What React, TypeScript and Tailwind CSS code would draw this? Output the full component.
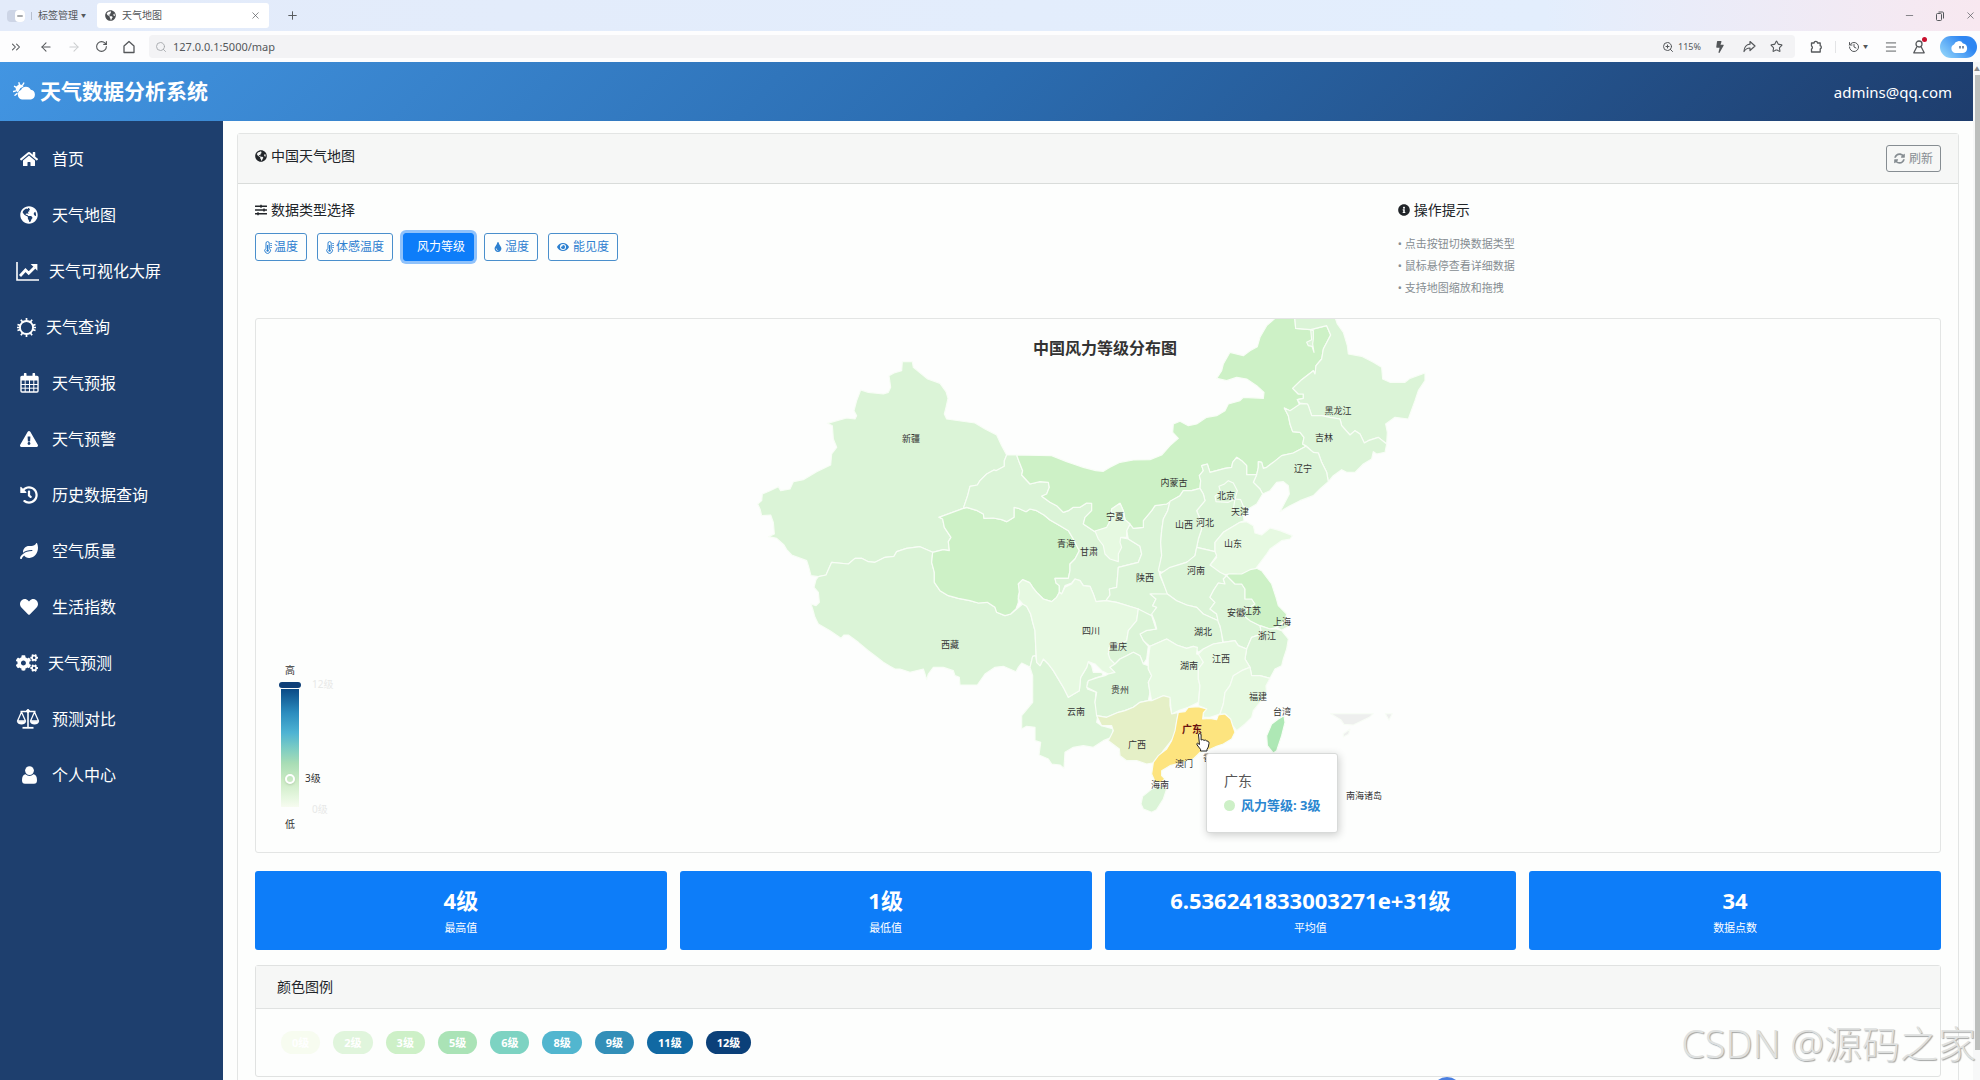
import { useState } from "react"
import clsx from "clsx"
import {
  ArrowLeft,
  ArrowRight,
  ChevronsRight,
  History,
  Menu,
  Minus,
  Plus,
  RotateCw,
  Search,
  Star,
  X,
  ZoomIn,
} from "lucide-react"
import {
  FaBolt,
  FaCogs,
  FaExclamationTriangle,
  FaEye,
  FaGlobeAmericas,
  FaHeart,
  FaHistory,
  FaHome,
  FaInfoCircle,
  FaLeaf,
  FaSlidersH,
  FaSyncAlt,
  FaTint,
} from "react-icons/fa"

type Region = {
  name: string
  fill: string
  points: string
}

type MapSheet = {
  x: number
  y: number
  regions: Region[]
}

const LEVEL_1 = "#e6f9e1"
const LEVEL_2 = "#dbf4d7"
const LEVEL_3 = "#cdf1c6"

const SHEETS: MapSheet[] = [
  {
    x: 0,
    y: 0,
    regions: [
      {
        name: "新疆",
        fill: LEVEL_2,
        points:
          "487,158 517,158 520,175 563,210 600,223 618,248 624,268 618,295 613,315 620,330 705,342 735,360 770,378 785,410 800,438 793,455 793,472 768,485 762,483 740,495 720,515 712,528 690,532 683,560 670,598 597,625 608,630 613,655 633,685 625,698 628,725 610,722 578,730 540,713 500,718 470,728 462,742 435,745 405,760 385,758 365,748 345,748 325,765 275,760 258,798 235,803 213,800 205,770 200,755 155,738 140,722 132,708 110,688 85,683 103,675 100,640 92,618 65,620 60,600 53,585 65,575 67,555 90,545 115,533 122,545 150,540 160,518 190,512 230,488 272,468 275,435 290,415 280,390 277,350 262,343 320,327 345,330 350,320 342,305 350,275 362,243 385,250 430,255 445,250 452,235 447,200 462,192 485,185",
      },
      {
        name: "西藏",
        fill: LEVEL_2,
        points:
          "258,798 275,760 325,765 345,748 365,748 385,758 405,760 435,745 462,742 470,728 500,718 540,713 578,730 575,760 583,790 583,820 600,845 625,860 655,868 690,875 715,882 742,880 765,895 770,910 795,920 812,915 830,900 848,885 860,892 872,915 878,940 885,965 887,1010 888,1040 878,1042 870,1075 862,1070 845,1062 835,1075 828,1088 790,1072 765,1075 735,1095 712,1128 660,1128 658,1105 645,1100 640,1085 610,1075 580,1075 565,1095 560,1112 555,1095 550,1080 510,1090 480,1080 465,1080 450,1072 430,1060 405,1040 385,1025 355,1000 325,978 312,978 303,988 270,965 235,945 225,925 218,900 213,885 228,890 238,880 235,850 222,835 228,812 235,803",
      },
      {
        name: "青海",
        fill: LEVEL_3,
        points:
          "597,625 670,598 680,595 690,598 712,605 730,615 732,628 760,627 785,632 800,638 822,625 822,595 835,598 858,608 870,600 890,605 912,618 930,633 960,650 985,665 1000,690 1010,710 1018,725 1005,750 990,765 990,785 985,808 945,808 948,822 958,830 958,850 950,865 935,878 910,870 890,850 878,835 868,820 848,812 835,825 840,845 835,860 835,880 828,900 812,915 795,920 770,910 765,895 742,880 715,882 690,875 655,868 625,860 600,845 583,820 583,790 575,760 578,730 610,722 628,725 625,698 633,685 613,655 608,630",
      },
      {
        name: "甘肃",
        fill: LEVEL_2,
        points:
          "800,438 830,438 838,460 848,485 845,498 870,525 900,518 925,520 928,535 920,555 905,562 930,580 950,590 970,610 985,605 1000,595 1020,595 1040,582 1055,583 1055,605 1035,625 1030,645 1065,668 1140,660 1140,685 1165,690 1200,712 1205,735 1195,760 1135,775 1130,835 1108,840 1110,858 1098,875 1068,878 1060,855 1050,832 1030,830 1020,815 1005,810 995,822 975,830 965,855 958,850 958,830 948,822 945,808 985,808 990,785 990,765 1005,750 1018,725 1010,710 1000,690 985,665 960,650 930,633 912,618 890,605 870,600 858,608 835,598 822,595 822,625 800,638 785,632 760,627 732,628 730,615 712,605 690,598 680,595 670,598 683,560 690,532 712,528 720,515 740,495 762,483 768,485 793,472 793,455",
      },
      {
        name: "陕西",
        fill: LEVEL_2,
        points:
          "1280,585 1290,577 1283,605 1270,630 1265,665 1262,700 1265,740 1257,787 1260,800 1280,845 1285,857 1232,855 1248,870 1238,890 1250,895 1235,920 1205,910 1195,900 1130,880 1098,875 1110,858 1108,840 1130,835 1135,775 1195,760 1205,735 1200,712 1165,690 1160,665 1170,645 1180,658 1210,655 1210,635 1235,605 1245,590",
      },
    ],
  },
  {
    x: 1080,
    y: 0,
    regions: [
      {
        name: "内蒙古",
        fill: LEVEL_3,
        points:
          "-250,438 -145,440 -100,458 -80,465 -50,475 -12,485 10,487 30,475 60,460 100,453 150,452 185,438 210,410 235,388 218,370 220,345 240,337 265,350 290,345 320,325 350,320 375,305 385,285 420,275 430,265 490,268 492,250 470,230 440,210 410,205 380,215 350,208 365,185 370,165 390,130 430,140 450,125 472,113 480,85 500,50 525,28 540,10 583,10 587,58 632,62 680,50 692,78 670,120 665,150 648,170 645,195 640,185 605,212 578,238 595,255 610,255 610,268 592,272 600,290 570,305 553,297 565,320 570,345 578,368 600,370 612,385 608,405 618,412 580,432 545,440 520,460 500,475 490,478 485,460 475,458 475,475 470,497 440,497 440,470 425,455 410,445 398,460 395,475 375,478 350,485 330,490 322,465 305,470 310,485 298,500 302,515 300,538 275,545 250,545 240,560 215,575 200,585 165,590 155,605 130,635 130,655 100,658 90,645 75,632 70,605 60,583 35,600 28,640 25,655 -15,668 -50,645 -45,625 -25,605 -25,583 -40,582 -60,595 -80,595 -95,605 -110,610 -130,590 -150,580 -175,562 -160,555 -152,535 -155,520 -180,518 -210,525 -235,498 -232,485 -242,460",
      },
      {
        name: "宁夏",
        fill: LEVEL_1,
        points:
          "-15,666 20,655 28,640 35,600 60,583 70,605 75,632 90,645 80,665 80,685 62,685 60,700 65,715 55,735 55,758 30,750 15,735 10,710 -5,690",
      },
      {
        name: "黑龙江",
        fill: LEVEL_2,
        points:
          "583,10 700,10 712,45 730,70 742,110 745,135 785,142 820,160 845,175 848,210 870,220 915,220 930,208 975,192 975,215 955,245 945,275 925,330 885,325 857,345 862,370 860,405 835,385 805,395 793,402 780,375 765,365 750,378 725,350 720,330 690,325 665,320 635,320 625,290 622,285 600,282 592,272 610,268 610,255 595,255 578,238 605,212 640,185 645,195 648,170 665,150 670,120 692,78 680,50 632,62 587,58",
      },
      {
        name: "加格达奇",
        fill: LEVEL_2,
        points: "632,62 640,65 640,90 638,105 642,130 636,112 625,110 620,100 635,92",
      },
      {
        name: "吉林",
        fill: LEVEL_2,
        points:
          "600,285 622,285 625,290 635,320 665,320 690,325 720,330 725,350 750,378 765,365 780,375 793,402 805,395 835,385 860,405 855,430 830,435 820,428 815,450 790,465 765,490 740,490 725,482 700,500 685,518 680,490 665,460 655,432 640,430 618,410 608,405 612,385 600,370 578,368 570,345 565,320 553,297 570,305",
      },
      {
        name: "辽宁",
        fill: LEVEL_2,
        points:
          "618,412 640,430 655,432 665,460 680,490 685,518 660,540 640,560 600,575 570,590 540,608 555,580 568,555 565,530 550,518 530,520 510,545 488,555 480,540 460,520 470,497 475,475 475,458 485,460 490,478 500,475 520,460 545,440 580,432",
      },
      {
        name: "河北",
        fill: LEVEL_2,
        points:
          "300,538 302,515 298,500 310,485 305,470 322,465 330,490 350,485 375,478 395,475 398,460 410,445 425,455 440,470 440,497 470,497 460,520 480,540 488,555 470,585 450,597 430,610 432,635 420,640 395,655 370,670 345,700 345,728 290,715 295,690 305,660 300,630 290,605 315,575 310,555",
      },
      {
        name: "北京",
        fill: LEVEL_2,
        points: "348,578 345,562 362,550 357,532 372,526 385,515 400,522 412,545 405,570 385,580",
      },
      {
        name: "天津",
        fill: LEVEL_2,
        points: "405,570 422,572 430,592 445,600 440,615 415,622 400,600",
      },
      {
        name: "山西",
        fill: LEVEL_2,
        points:
          "300,538 310,555 315,575 290,605 300,630 305,660 295,690 290,715 285,740 265,758 230,770 185,790 175,785 185,740 182,700 185,665 190,630 203,605 210,577 240,560 250,545 275,545",
      },
      {
        name: "山东",
        fill: LEVEL_1,
        points:
          "345,728 345,700 370,670 395,655 420,640 440,638 460,650 465,672 485,678 510,657 540,665 578,680 570,690 545,695 510,720 500,735 470,775 455,795 440,800 400,795 375,797 350,790 330,768 350,745",
      },
    ],
  },
  {
    x: 0,
    y: 750,
    regions: [
      {
        name: "云南",
        fill: LEVEL_2,
        points:
          "870,325 878,292 887,290 890,310 900,320 910,300 925,315 940,335 970,385 985,415 1018,395 1022,355 1040,325 1045,308 1055,320 1060,340 1085,340 1090,350 1065,357 1042,370 1042,390 1068,400 1065,430 1075,460 1070,490 1085,500 1120,510 1115,535 1090,545 1060,565 1030,560 1000,565 975,580 972,628 960,618 935,615 925,600 897,588 902,550 885,545 885,505 860,502 845,510 845,470 878,430 878,350",
      },
      {
        name: "四川",
        fill: LEVEL_1,
        points:
          "848,62 870,72 878,85 890,100 910,120 935,128 950,115 958,100 965,105 975,85 995,75 1005,60 1020,65 1030,80 1050,82 1060,105 1068,128 1098,125 1130,130 1195,150 1190,185 1165,215 1160,245 1125,262 1108,265 1105,285 1125,300 1125,315 1110,325 1125,340 1105,345 1085,335 1065,315 1045,308 1040,325 1022,355 1018,395 985,415 970,385 940,335 925,315 910,300 900,320 890,310 887,260 885,215 878,190 872,165 860,142 848,135 835,120 838,100 835,75",
      },
    ],
  },
  {
    x: 960,
    y: 750,
    regions: [
      {
        name: "河南",
        fill: LEVEL_2,
        points:
          "300,45 330,25 380,10 405,-10 410,-35 465,-22 470,-10 450,18 480,40 500,50 490,60 495,75 475,72 460,95 450,115 465,130 450,150 470,165 475,185 430,165 410,145 380,138 350,125 322,105",
      },
      {
        name: "湖北",
        fill: LEVEL_2,
        points:
          "270,105 322,105 350,125 380,138 410,145 430,165 475,185 485,220 488,250 460,255 430,270 415,280 400,262 380,268 350,258 320,240 270,262 250,245 240,225 258,215 290,210 285,190 275,165 290,145 278,140 288,120",
      },
      {
        name: "安徽",
        fill: LEVEL_2,
        points:
          "500,50 525,75 545,75 555,90 555,120 575,120 585,135 570,145 545,165 570,185 600,200 605,225 575,235 560,270 535,260 525,245 490,250 480,200 475,190 470,165 450,150 465,130 450,115 460,95 475,72 495,75 490,60",
      },
      {
        name: "江苏",
        fill: LEVEL_3,
        points:
          "505,45 545,45 570,32 590,28 605,35 635,75 648,115 655,140 680,165 675,185 650,205 630,210 600,200 570,185 545,165 570,145 585,135 575,120 555,120 555,90 545,75 525,75 500,50",
      },
      { name: "上海", fill: LEVEL_2, points: "650,205 675,188 690,200 665,214" },
      {
        name: "浙江",
        fill: LEVEL_2,
        points:
          "605,225 600,200 630,210 650,210 665,215 685,240 680,270 670,300 665,320 645,330 630,358 600,350 575,350 570,325 555,300 560,270 575,235",
      },
      {
        name: "重庆",
        fill: LEVEL_2,
        points:
          "235,150 275,170 288,210 258,215 240,225 250,245 265,262 260,300 250,315 240,290 220,280 200,290 180,300 165,315 150,300 145,285 148,265 165,262 200,245 205,215 230,185",
      },
      {
        name: "贵州",
        fill: LEVEL_2,
        points:
          "165,315 180,300 200,290 220,280 240,290 250,315 265,320 265,330 275,350 265,370 270,400 265,425 240,430 220,445 195,455 175,460 140,475 110,470 105,430 110,400 80,385 85,365 115,355 135,350 145,345 165,340 150,325",
      },
      {
        name: "湖南",
        fill: LEVEL_1,
        points:
          "270,262 320,240 350,258 380,268 400,262 412,265 410,285 430,290 430,310 415,330 415,360 420,380 415,430 385,445 355,455 335,465 330,420 310,410 275,425 270,400 265,370 275,350 265,330 265,300",
      },
      {
        name: "江西",
        fill: LEVEL_1,
        points:
          "415,285 430,270 460,255 490,250 525,245 535,260 560,270 555,300 570,325 545,335 520,350 510,380 495,400 490,435 480,465 450,475 430,475 430,460 440,450 415,440 420,380 415,360 415,330 430,310",
      },
      {
        name: "福建",
        fill: LEVEL_1,
        points:
          "570,325 575,350 600,350 630,358 618,380 620,410 600,430 580,455 575,475 555,495 530,515 518,500 510,480 495,465 480,465 490,435 495,400 510,380 520,350 545,335",
      },
      {
        name: "广西",
        fill: "#e5f0c7",
        points:
          "110,470 140,475 175,460 195,455 220,445 240,430 265,425 275,425 310,410 330,415 330,440 335,465 355,460 350,490 345,530 330,550 310,575 290,610 260,615 230,605 200,605 180,590 178,570 145,545 160,515 155,500 125,500",
      },
      {
        name: "海南",
        fill: LEVEL_2,
        points: "275,690 305,680 320,690 310,720 290,752 275,760 250,750 243,735 248,712",
      },
      {
        name: "台湾",
        fill: "#aee8b5",
        points: "655,480 672,470 675,490 665,530 650,575 640,582 622,560 620,530 635,495",
      },
      {
        name: "南海诸岛",
        fill: "#eeefee",
        points: "812,464 940,464 928,475 880,498 852,496 842,482",
      },
      { name: "南海诸岛-2", fill: "#eeefee", points: "850,524 870,510 866,526 850,534" },
      { name: "南海诸岛-3", fill: "#eeefee", points: "976,464 997,464 987,484" },
      {
        name: "广东",
        fill: "#fde47f",
        points:
          "355,460 375,458 385,445 415,443 440,450 430,462 428,480 450,478 470,482 475,468 495,465 512,480 518,500 525,520 515,540 490,555 470,562 440,575 420,580 400,600 360,612 330,620 305,635 305,650 315,660 300,672 285,668 275,645 280,610 295,590 320,570 335,545 345,515 350,485",
      },
    ],
  },
]

const MAP_LABELS: [string, number, number][] = [
  ["新疆", 656, 119],
  ["西藏", 695, 325],
  ["青海", 811, 224],
  ["甘肃", 834, 232],
  ["宁夏", 860, 197],
  ["内蒙古", 919, 163],
  ["黑龙江", 1083, 91],
  ["吉林", 1069, 118],
  ["辽宁", 1048, 149],
  ["北京", 971, 176],
  ["天津", 985, 192],
  ["山西", 929, 205],
  ["河北", 950, 203],
  ["山东", 978, 224],
  ["河南", 941, 251],
  ["陕西", 890, 258],
  ["四川", 836, 311],
  ["重庆", 863, 327],
  ["贵州", 865, 370],
  ["云南", 821, 392],
  ["湖北", 948, 312],
  ["安徽", 981, 293],
  ["江苏", 997, 291],
  ["上海", 1027, 302],
  ["浙江", 1012, 316],
  ["湖南", 934, 346],
  ["江西", 966, 339],
  ["福建", 1003, 377],
  ["台湾", 1027, 392],
  ["广西", 882, 425],
  ["香港", 957, 438],
  ["澳门", 929, 444],
  ["海南", 905, 465],
  ["南海诸岛", 1109, 476],
]

const NAV_ITEMS = [
  { label: "首页", icon: <FaHome />, gap: "gap-[13px] pl-[19px]" },
  { label: "天气地图", icon: <FaGlobeAmericas />, gap: "gap-[13px] pl-[19px]" },
  { label: "天气可视化大屏", icon: <TrendIcon />, gap: "gap-[10px] pl-[16px]" },
  { label: "天气查询", icon: <SunIcon />, gap: "gap-[10px] pl-[16px]" },
  { label: "天气预报", icon: <CalendarIcon />, gap: "gap-[13px] pl-[19px]" },
  { label: "天气预警", icon: <FaExclamationTriangle />, gap: "gap-[13px] pl-[19px]" },
  { label: "历史数据查询", icon: <FaHistory />, gap: "gap-[13px] pl-[19px]" },
  { label: "空气质量", icon: <FaLeaf />, gap: "gap-[13px] pl-[19px]" },
  { label: "生活指数", icon: <FaHeart />, gap: "gap-[13px] pl-[19px]" },
  { label: "天气预测", icon: <FaCogs size={22} />, gap: "gap-[10px] pl-[16px]" },
  { label: "预测对比", icon: <ScaleIcon />, gap: "gap-[12px] pl-[16px]" },
  { label: "个人中心", icon: <UserIcon />, gap: "gap-[13px] pl-[19px]" },
]

const DATA_TYPES = [
  { label: "温度", icon: <ThermometerIcon /> },
  { label: "体感温度", icon: <ThermometerIcon /> },
  { label: "风力等级", icon: null },
  { label: "湿度", icon: <FaTint size={10} /> },
  { label: "能见度", icon: <FaEye className="mr-[2px]" size={12} /> },
]

const TIPS = ["点击按钮切换数据类型", "鼠标悬停查看详细数据", "支持地图缩放和拖拽"]

const STATS = [
  { value: "4级", label: "最高值" },
  { value: "1级", label: "最低值" },
  { value: "6.536241833003271e+31级", label: "平均值" },
  { value: "34", label: "数据点数" },
]

const LEGEND = [
  { label: "0级", color: "bg-[#f7fcf0]" },
  { label: "2级", color: "bg-[#e0f5dc]" },
  { label: "3级", color: "bg-[#cdf0c7]" },
  { label: "5级", color: "bg-[#aae3b6]" },
  { label: "6级", color: "bg-[#7dd3c2]" },
  { label: "8级", color: "bg-[#52b6cf]" },
  { label: "9级", color: "bg-[#338fb8]" },
  { label: "11级", color: "bg-[#1169a3]" },
  { label: "12级", color: "bg-[#0b4079]" },
]

export default function App() {
  return (
    <div className="relative flex h-screen flex-col overflow-hidden bg-[#fdfefd] font-['Noto_Sans','Noto_Sans_CJK_SC',sans-serif] text-[#212529]">
      <TabStrip />
      <Toolbar />
      <div className="flex min-h-0 flex-1">
        <div className="flex min-w-0 flex-1 flex-col">
          <header className="flex h-[59px] shrink-0 items-center justify-between bg-[linear-gradient(135deg,#4295e2_0%,#2b6cb0_50%,#1e3d6d_100%)] pl-[13px] pr-[21px] text-white">
            <a className="mb-[2px] flex items-center gap-[4px] text-[21px] leading-7 font-bold" href="#">
              <PartlySunnyIcon />
              天气数据分析系统
            </a>
            <span className="text-[15px] leading-6">admins@qq.com</span>
          </header>
          <div className="flex min-h-0 flex-1">
            <Sidebar />
            <main className="min-w-0 flex-1 overflow-hidden px-[14px] pt-[12px]">
              <MapCard />
            </main>
          </div>
        </div>
        <div className="flex w-[7px] shrink-0 flex-col items-end bg-[#f7f8f8]">
          <span className="flex h-[13px] items-center text-[6px] leading-none text-[#8b8b8b]">▲</span>
          <div className="mb-[30px] w-[5px] flex-1 bg-[#bcbfbd]" />
        </div>
      </div>
      <div className="absolute right-[518px] -bottom-[27px] size-[30px] rounded-full bg-[#4b7fe0]" />
      <p className="pointer-events-none absolute right-[4px] bottom-[13px] text-[38px] leading-[48px] font-light whitespace-nowrap text-[#dfe1e0] [text-shadow:1px_1px_1px_#a4a6a5]">
        CSDN @源码之家
      </p>
    </div>
  )
}

function TabStrip() {
  return (
    <div className="flex h-[31px] shrink-0 items-center bg-[linear-gradient(90deg,#e3ebfa_0%,#e3eefd_78%,#f8e8f0_100%)] pl-[7px] text-[10px] text-[#55585c]">
      <div className="flex h-3 w-[18px] justify-end rounded-sm bg-[#cdd5e6]">
        <span className="flex w-[10px] items-center justify-center rounded-sm bg-white">
          <Minus size={8} strokeWidth={3} />
        </span>
      </div>
      <span className="mx-[6px] h-2 w-px bg-[#b8c0cf]" />
      <button className="flex items-center gap-[3px]" type="button">
        标签管理 <span className="text-[5px]">▼</span>
      </button>
      <div className="ml-[11px] flex h-[25px] w-[172px] items-center gap-[6px] rounded-[3px] bg-white px-[8px]">
        <FaGlobeAmericas className="text-[#4c4f52]" size={11} />
        <span className="flex-1">天气地图</span>
        <button aria-label="关闭标签" type="button">
          <X size={11} strokeWidth={1.5} />
        </button>
      </div>
      <button aria-label="新建标签" className="ml-[17px]" type="button">
        <Plus size={13} strokeWidth={1.8} />
      </button>
      <div className="ml-auto flex items-center gap-[20px] pr-[4px]">
        <Minus size={11} strokeWidth={1.5} />
        <svg className="size-[10px]" fill="none" stroke="currentColor" viewBox="0 0 10 10">
          <rect height="7" rx="1" width="5" x="1.5" y="2.5" />
          <path d="M3.5 1h4q1 0 1 1v5.500" />
        </svg>
        <X size={11} strokeWidth={1.5} />
      </div>
    </div>
  )
}

function Toolbar() {
  return (
    <div className="flex h-[31px] shrink-0 items-center bg-[#fdfdfe] pl-[9px] text-[#54575a]">
      <div className="flex items-center gap-[14px]">
        <ChevronsRight size={14} strokeWidth={1.8} />
        <ArrowLeft className="ml-[2px]" size={14} strokeWidth={1.8} />
        <ArrowRight className="text-[#cbcdcf]" size={14} strokeWidth={1.8} />
        <RotateCw size={13} strokeWidth={2} />
        <svg className="size-[14px]" fill="none" stroke="currentColor" strokeLinejoin="round" strokeWidth="1.300" viewBox="0 0 14 14">
          <path d="M2 6 7 1.500 12 6v6.500H2Z" />
        </svg>
      </div>
      <div className="ml-[13px] flex h-[23px] flex-1 items-center rounded-[4px] bg-[#f3f3f5] pr-[12px] pl-[6px]">
        <Search className="text-[#a5a8ab]" size={12} strokeWidth={1.8} />
        <input
          aria-label="地址栏"
          className="ml-[6px] min-w-0 flex-1 bg-transparent text-[11px] leading-4 outline-none"
          defaultValue="127.0.0.1:5000/map"
          type="text"
        />
        <ZoomIn size={12} strokeWidth={2} />
        <span className="ml-[4px] text-[9px]">115%</span>
        <FaBolt className="ml-[13px]" size={12} />
        <svg className="ml-[17px] size-[13px]" fill="none" stroke="currentColor" strokeLinejoin="round" strokeWidth="1.2" viewBox="0 0 13 13">
          <path d="M7 1.500 12 6 7 10.500V8C4.500 8 2.500 9 1 11.500 1 7.500 3.500 4.500 7 4.200Z" />
        </svg>
        <Star className="ml-[14px]" size={13} strokeWidth={2} />
      </div>
      <div className="flex items-center pr-[3px] pl-[15px]">
        <svg className="size-[13px]" fill="none" stroke="currentColor" strokeLinejoin="round" strokeWidth="1.300" viewBox="0 0 13 13">
          <path d="M1.500 3h2.600a1.700 1.700 0 0 1 3.400 0h2.700v2.700a1.700 1.700 0 0 1 0 3.200V12H1.500V9a1.700 1.700 0 0 0 0-3Z" />
        </svg>
        <span className="mx-[12px] h-3 w-px bg-[#e3e4e6]" />
        <History size={12} strokeWidth={2} />
        <span className="ml-[3px] text-[5px]">▼</span>
        <Menu className="ml-[16px]" size={14} strokeWidth={1.6} />
        <div className="relative ml-[14px]">
          <svg className="size-[14px]" fill="none" stroke="currentColor" strokeWidth="1.3" viewBox="0 0 14 14">
            <circle cx="7" cy="4" r="3" />
            <path d="M5 6.500 1.800 12.800h10.400L9 6.500" strokeLinejoin="round" />
          </svg>
          <span className="absolute -top-[3px] -right-[1px] size-[5px] rounded-full bg-[#c8102e]" />
        </div>
        <div className="ml-[14px] flex h-[22px] w-[37px] items-center justify-center rounded-full bg-[linear-gradient(45deg,#9bdcfb,#2f86f2_70%)]">
          <svg className="h-[13px] w-[18px]" fill="white" viewBox="0 0 18 13">
            <path d="M5 13a4.500 4.500 0 0 1-1-8.500 5 5 0 0 1 9-1A4.800 4.800 0 0 1 13 13Z" />
            <path d="M10 6v2.500M13 6v2.500" stroke="#26456f" strokeWidth="1.200" />
          </svg>
        </div>
      </div>
    </div>
  )
}

function Sidebar() {
  return (
    <nav className="w-[223px] shrink-0 bg-[#1e3f6e] pt-[10px] text-white">
      {NAV_ITEMS.map((item) => (
        <a className={clsx("flex h-14 items-center text-[16px] leading-6", item.gap)} href="#" key={item.label}>
          <span className="flex min-w-[20px] justify-center text-[18px]">{item.icon}</span>
          {item.label}
        </a>
      ))}
    </nav>
  )
}

function MapCard() {
  const [dataType, setDataType] = useState("风力等级")

  return (
    <section className="min-h-[1000px] rounded-[3px] border border-[#e3e5e4]">
      <div className="flex h-[50px] items-center justify-between border-b border-[#d9dcda] bg-[#f6f7f6] px-[17px]">
        <h1 className="mb-[5px] flex items-center gap-[4px] text-[14px] leading-5">
          <FaGlobeAmericas size={12} />
          中国天气地图
        </h1>
        <button
          className="flex h-[27px] items-center gap-[4px] rounded-[3px] border border-[#868d92] px-[7px] text-[12px] text-[#868d92]"
          type="button"
        >
          <FaSyncAlt size={11} />
          刷新
        </button>
      </div>

      <div className="px-[17px] pt-[16px]">
        <div className="grid h-[118px] grid-cols-3 gap-7">
          <div className="col-span-2">
            <h2 className="flex items-center gap-[4px] text-[14px] leading-5">
              <FaSlidersH size={12} />
              数据类型选择
            </h2>
            <div className="mt-[13px] flex gap-[10px]">
              {DATA_TYPES.map((type) => (
                <button
                  aria-pressed={type.label === dataType}
                  className={clsx(
                    "flex h-[28px] items-center gap-[2px] rounded-[3px] border px-[8px] text-[12px]",
                    type.label === dataType
                      ? "border-[#0d7df9] bg-[#0d7df9] pl-[13px] text-white ring-3 ring-[#8fc2fb]"
                      : "border-[#4a8fcc] text-[#2d80d0]",
                  )}
                  key={type.label}
                  onClick={() => setDataType(type.label)}
                  type="button"
                >
                  {type.icon}
                  {type.label}
                </button>
              ))}
            </div>
          </div>
          <div>
            <h2 className="flex items-center gap-[4px] text-[14px] leading-5">
              <FaInfoCircle size={12} />
              操作提示
            </h2>
            <ul className="mt-[13px] text-[11px] leading-[22px] text-[#868d92]">
              {TIPS.map((tip) => (
                <li key={tip}>• {tip}</li>
              ))}
            </ul>
          </div>
        </div>

        <WindMap />

        <div className="mt-[18px] grid grid-cols-4 gap-[13px]">
          {STATS.map((stat) => (
            <div
              className="flex h-[79px] flex-col items-center justify-center gap-[6px] rounded-[3px] bg-[#0d7df9] text-white"
              key={stat.label}
            >
              <p className="text-[22px] leading-7 font-bold">{stat.value}</p>
              <p className="text-[11px] leading-4">{stat.label}</p>
            </div>
          ))}
        </div>

        <div className="mt-[15px] rounded-[3px] border border-[#e0e2e1]">
          <h2 className="border-b border-[#e0e2e1] bg-[#f6f7f6] px-[21px] py-[11px] text-[14px] leading-5">颜色图例</h2>
          <div className="flex gap-[13px] px-[25px] pt-[22px] pb-[22px]">
            {LEGEND.map((item) => (
              <span
                className={clsx("rounded-full px-[11px] text-[11px] leading-[23px] font-bold text-white", item.color)}
                key={item.label}
              >
                {item.label}
              </span>
            ))}
          </div>
        </div>
      </div>
    </section>
  )
}

function WindMap() {
  return (
    <div className="relative h-[535px] overflow-hidden rounded-[3px] border border-[#e3e5e4]">
      <svg className="h-full w-full" viewBox="43 0 1600 533">
        <g stroke="#f8fdf6" strokeLinejoin="round" strokeWidth="3.500" transform="translate(485 -10) scale(0.33333)">
          {SHEETS.map((sheet) => (
            <g key={`${sheet.x}-${sheet.y}`} transform={`translate(${sheet.x} ${sheet.y})`}>
              {sheet.regions.map((region) => (
                <polygon fill={region.fill} key={region.name} points={region.points} />
              ))}
            </g>
          ))}
        </g>
        <text className="text-[16px] font-bold" dominantBaseline="central" fill="#333333" textAnchor="middle" x="850" y="29">
          中国风力等级分布图
        </text>
        <g className="text-[9px]" dominantBaseline="central" fill="#333333" textAnchor="middle">
          {MAP_LABELS.map(([name, x, y]) => (
            <text key={name} x={x} y={y}>
              {name}
            </text>
          ))}
        </g>
        <text className="text-[10px] font-bold" dominantBaseline="central" fill="#6b1410" textAnchor="middle" x="937" y="410">
          广东
        </text>
        <path
          d="M943.500 416q0-1.500 1.300-1.500t1.300 1.500v5l1.500-.4 1.400.7 1.500-.2 1.300.9 1.200.2q1.200.6 1 2.200l-.7 3.600-1.300 2.300v1.700h-6.500v-1.700l-3.400-4.300q-.8-1.800.5-1.800l1.900 1.300Z"
          fill="white"
          stroke="#222222"
        />
      </svg>

      <div className="absolute bottom-[20px] left-[23px] flex w-[22px] flex-col items-center text-[10px] leading-4 text-[#333333]">
        <span>高</span>
        <span className="mt-[4px] h-[6px] w-full rounded-full bg-[#0f4079]" />
        <div className="relative mt-px h-[118px] w-[18px] bg-[linear-gradient(180deg,#0a4a86_0%,#2b8cbe_20%,#4eb3d3_37%,#7bccc4_50%,#a8ddb5_63%,#ccebc5_78%,#e6f7e0_92%,#f7fcf0_100%)]">
          <span className="absolute top-[85px] left-[4px] size-[10px] rounded-full border-2 border-white shadow-sm" />
          <span className="absolute -top-[13px] left-[31px] whitespace-nowrap text-[#e8e9e8]">12级</span>
          <span className="absolute top-[81px] left-[24px] whitespace-nowrap">3级</span>
          <span className="absolute top-[112px] left-[31px] whitespace-nowrap text-[#e8e9e8]">0级</span>
        </div>
        <span className="mt-[9px]">低</span>
      </div>

      <div
        className="absolute top-[434px] left-1/2 ml-[108px] h-[80px] w-[132px] rounded-[3px] border border-[#d8dad9] bg-white pt-[15px] pl-[17px] shadow-[1px_2px_8px_rgba(0,0,0,0.2)]"
        role="tooltip"
      >
        <p className="text-[14px] leading-6 text-[#555555]">广东</p>
        <p className="flex items-center gap-[6px] text-[13px] leading-6 font-bold whitespace-nowrap text-[#2a86d0]">
          <span className="size-[11px] rounded-full bg-[#cdf0c7]" />
          风力等级: 3级
        </p>
      </div>
    </div>
  )
}

function PartlySunnyIcon() {
  return (
    <svg className="h-[18px] w-[23px]" fill="currentColor" viewBox="0 0 23 18">
      <path d="M9 17.500a5 5 0 0 1-1-9.600 5.500 5.500 0 0 1 9.800-.2A5 5 0 0 1 18 17.500Z" />
      <path d="M3.300 8.800a4.200 4.200 0 0 1 7.200-4.300L7.300 6.300 4.800 10.500Z" />
      <path
        d="M.5 9.500 3 8.800M1.500 4.300 3.700 5.700M6 .8 6.500 3.200M10.800 1 9.600 3.200M2 13.200 4 11.600"
        stroke="currentColor"
        strokeLinecap="round"
        strokeWidth="1.400"
      />
    </svg>
  )
}

function TrendIcon() {
  return (
    <svg className="h-[19px] w-[23px]" fill="none" viewBox="0 0 23 19">
      <path d="M1 0v18h22" stroke="currentColor" strokeWidth="1.600" />
      <path d="M4 14 9.500 8l3.200 3.200L18.500 5.400" stroke="currentColor" strokeWidth="2.800" />
      <path d="M14.600 2h6.800v6.800Z" fill="currentColor" />
    </svg>
  )
}

function SunIcon() {
  return (
    <svg className="size-[19px]" fill="none" stroke="currentColor" viewBox="0 0 20 20">
      <circle cx="10" cy="10" r="6.900" strokeWidth="2" />
      <path
        d="M10 0v3M10 17v3M0 10h3M17 10h3M4.100 1.900 5.900 4.300M15.900 1.900 14.100 4.300M4.100 18.100 5.900 15.700M15.900 18.100 14.100 15.700M.5 6.900 3.300 7.800M19.500 6.900 16.700 7.800M.5 13.100 3.300 12.200M19.500 13.100 16.700 12.200"
        strokeWidth="1.800"
      />
    </svg>
  )
}

function CalendarIcon() {
  return (
    <svg className="h-[20px] w-[19px]" fill="none" stroke="currentColor" viewBox="0 0 19 20">
      <rect height="15.500" rx="1" strokeWidth="1.400" width="17" x="1" y="3.500" />
      <path d="M1 5.500h17" strokeWidth="4" />
      <path d="M1 11.500h17M1 15.200h17M5.200 7v12M9.500 7v12M13.800 7v12" />
      <path d="M5.200 1v4M13.800 1v4" strokeLinecap="round" strokeWidth="2.600" />
    </svg>
  )
}

function ScaleIcon() {
  return (
    <svg className="h-[20px] w-[24px]" fill="none" stroke="currentColor" strokeLinejoin="round" viewBox="0 0 24 20">
      <path d="M4.500 2.500h15M12 2v16" strokeWidth="1.600" />
      <path d="M6.500 18.800h11" strokeWidth="1.800" />
      <circle cx="12" cy="2" fill="currentColor" r="1.400" />
      <path d="M5.500 3 1.500 12h8Z M18.500 3l-4 9h8Z" strokeWidth="1.300" />
      <path d="M.8 12.300h9.400q-1 3.200-4.700 3.200t-4.700-3.200ZM13.800 12.300h9.400q-1 3.200-4.700 3.200t-4.700-3.200Z" fill="currentColor" stroke="none" />
    </svg>
  )
}

function UserIcon() {
  return (
    <svg className="h-[18px] w-[15px]" fill="currentColor" viewBox="0 0 15 18">
      <path d="M3.600 8.300Q5.200 9.900 7.500 9.900t3.900-1.600Q15 8.900 15 14.300 15 17.800 12 17.800H3Q0 17.800 0 14.300 0 8.900 3.600 8.300Z" />
      <circle cx="7.500" cy="4.600" r="4.400" />
    </svg>
  )
}

function ThermometerIcon() {
  return (
    <svg className="h-[13px] w-[8px]" fill="none" stroke="currentColor" viewBox="0 0 8 13">
      <path d="M2 7.300V2.200a1.600 1.600 0 0 1 3.200 0v5.100a2.800 2.800 0 1 1-3.200 0Z" />
      <path d="M3.600 4v5" strokeWidth="1.200" />
      <circle cx="3.600" cy="9.600" fill="currentColor" r="1.200" stroke="none" />
      <path d="M6.200 2.500H8M6.200 4.500H8M6.200 6.500H8" strokeWidth=".8" />
    </svg>
  )
}
